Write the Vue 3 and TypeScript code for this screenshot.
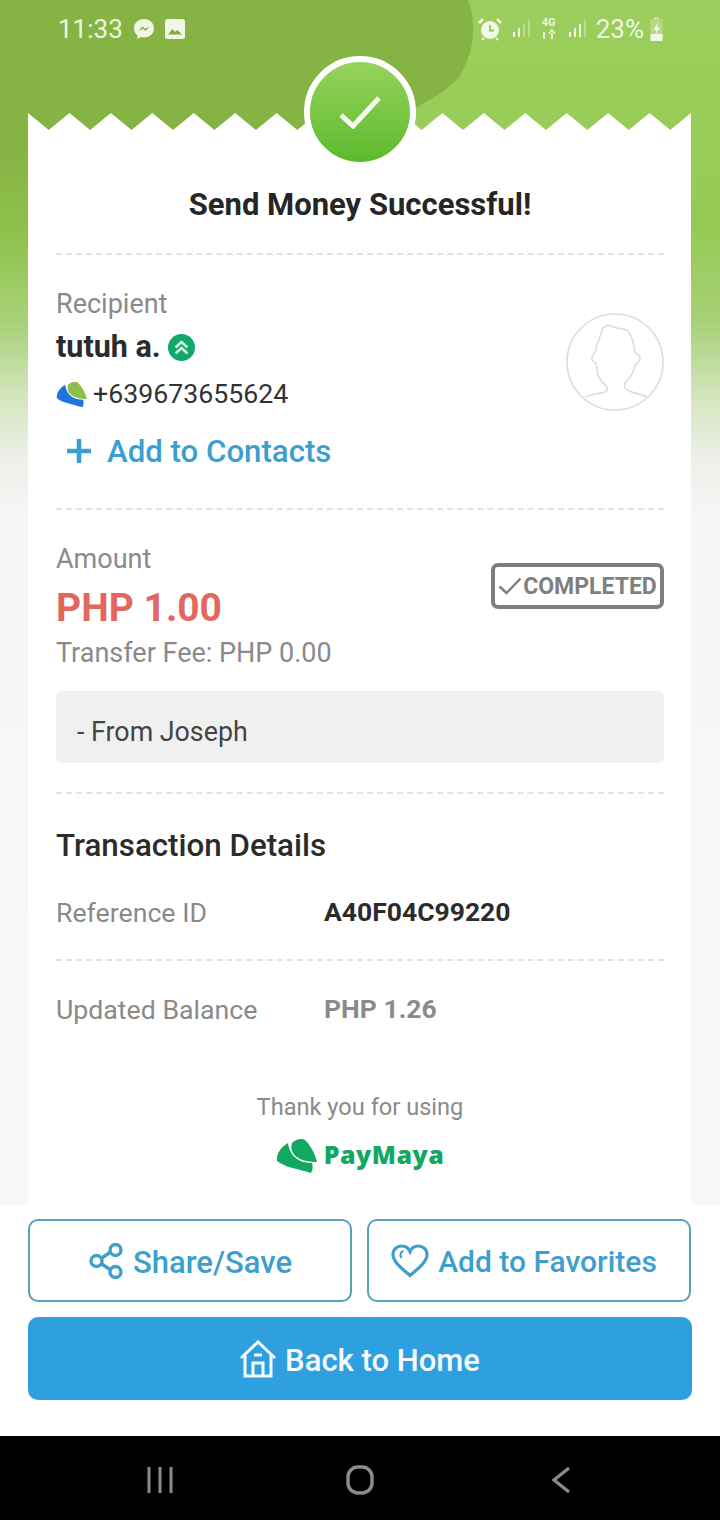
<script setup lang="ts">
const teeth = 16
const toothW = 663 / teeth
const points: string[] = ['0,18', '0,0']
for (let i = 0; i < teeth; i++) {
  points.push(`${(i + 0.5) * toothW},17`, `${(i + 1) * toothW},0`)
}
points.push('663,18')
const sawtooth = points.join(' ')

const signalBars = [
  { x: 1, y: 12, h: 5 },
  { x: 6, y: 8, h: 9 },
  { x: 11, y: 4, h: 13 },
  { x: 16, y: 0, h: 17 },
]
</script>

<template>
  <div class="page">
    <svg class="backdrop" width="720" height="480" viewBox="0 0 720 480" aria-hidden="true">
      <defs>
        <linearGradient id="blobFade" x1="0" y1="0" x2="0" y2="1">
          <stop offset="0" stop-color="#86b444" />
          <stop offset="0.5" stop-color="#86b444" />
          <stop offset="1" stop-color="#86b444" stop-opacity="0" />
        </linearGradient>
      </defs>
      <path
        d="M0 0H468C476 20 476 50 459 77C448 90 430 100 415 108V220H28V300H0Z"
        fill="url(#blobFade)"
      />
    </svg>

    <header class="status-bar">
      <div class="status-left">
        <span class="status-text">11:33</span>
        <svg width="22" height="22" viewBox="0 0 22 22">
          <path d="M11 1C5.4 1 1 5 1 10.300c0 2.900 1.300 5.300 3.300 7V21l3.300-1.900c1.100.3 2.200.5 3.400.5 5.600 0 10-4 10-9.300S16.600 1 11 1Z" fill="#f1f7e4" />
          <path d="M5.500 13 9.500 8.500l2.500 2.300 4.500-2.300-4 4.500-2.500-2.300Z" fill="#7fae3e" />
        </svg>
        <svg width="20" height="20" viewBox="0 0 20 20">
          <rect width="20" height="20" rx="2.500" fill="#f1f7e4" />
          <path d="M3 15.500 7.500 10l2.500 3 2.500-2 4.500 4.500Z" fill="#7fae3e" />
        </svg>
      </div>
      <div class="status-right">
        <svg width="24" height="24" viewBox="0 0 24 24">
          <circle cx="12" cy="13" r="9" fill="#f4f8e8" />
          <path d="M12 8v5.500h4" fill="none" stroke="#93c455" stroke-width="1.800" />
          <path d="M1 6 5 2M23 6l-4-4" stroke="#f4f8e8" stroke-width="2.500" />
          <path d="M6 21l-2 2M18 21l2 2" stroke="#f4f8e8" stroke-width="2" />
        </svg>
        <svg class="signal" width="20" height="18" viewBox="0 0 20 18">
          <rect v-for="(b, i) in signalBars" :key="i" :x="b.x" :y="b.y" width="2" :height="b.h" :fill="i < 2 ? '#f4f8e8' : '#bcdc8f'" />
        </svg>
        <div class="net">
          <span class="net-label">4G</span>
          <svg width="16" height="11" viewBox="0 0 16 11">
            <path d="M3 10V3M11 10V4M8 4.500 11 1l3 3.500" fill="none" stroke="#eef6dd" stroke-width="1.800" />
          </svg>
        </div>
        <svg class="signal" width="20" height="18" viewBox="0 0 20 18">
          <rect v-for="(b, i) in signalBars" :key="i" :x="b.x" :y="b.y" width="2" :height="b.h" :fill="i < 3 ? '#f4f8e8' : '#bcdc8f'" />
        </svg>
        <span class="status-text">23%</span>
        <svg class="battery" width="15" height="24" viewBox="0 0 14 24">
          <rect x="4.500" y="0" width="5" height="2" fill="#cfe3ad" />
          <rect x="1" y="2" width="12" height="22" fill="#b7d887" />
          <rect x="1" y="17" width="12" height="7" fill="#f4f8e8" />
          <path d="M8.500 5 4 13h3l-1.500 6 5-8.500H7.500Z" fill="#f4f8e8" />
        </svg>
      </div>
    </header>

    <div class="check-badge">
      <svg width="44" height="34" viewBox="0 0 44 34">
        <path d="M3 20 15 31 41 3" fill="none" stroke="#f6fbee" stroke-width="5" />
      </svg>
    </div>

    <main class="receipt">
      <svg class="teeth" width="663" height="18" viewBox="0 0 663 18" aria-hidden="true">
        <polygon :points="sawtooth" fill="#fff" />
      </svg>
      <div class="receipt-body">
        <h1 class="title">Send Money Successful!</h1>
        <div class="divider"></div>

        <section class="recipient">
          <div class="recipient-info">
            <div class="label">Recipient</div>
            <div class="name-row">
              <span class="name">tutuh a.</span>
              <svg width="27" height="27" viewBox="0 0 27 27">
                <circle cx="13.500" cy="13.500" r="13.500" fill="#12a86b" />
                <path d="M7.500 13.500 13.500 8l6 5.500M7.500 19.500l6-5.500 6 5.500" fill="none" stroke="#d8f5e6" stroke-width="2.400" />
              </svg>
            </div>
            <div class="phone-row">
              <svg width="31" height="27" viewBox="0 0 41 36">
                <path d="M16 5C20 1 26 0 29 2C35 8 39 16 41 24C32 24 21 22 17 15C15 11 15 8 16 5Z" fill="#8dbf4a" />
                <path d="M12 5C5 9 0 16 1 23C8 29 22 31 35 35C37 32 37 28 36 25C25 25 14 20 12 5Z" fill="#1f74dd" />
              </svg>
              <span>+639673655624</span>
            </div>
            <div class="add-contact">
              <svg width="26" height="26" viewBox="0 0 26 26">
                <path d="M13 1V25M1 13H25" stroke="#3a9fd0" stroke-width="4.500" />
              </svg>
              <span>Add to Contacts</span>
            </div>
          </div>
          <svg class="avatar" width="98" height="98" viewBox="0 0 98 98" aria-hidden="true">
            <circle cx="49" cy="49" r="48" fill="#fff" stroke="#dcdcdc" stroke-width="1.600" />
            <path
              d="M19 84C28 80 34 81 39 79C41 78 42 76 41 74C37 70 33 66 32 62L30 50C27 49 25 46 26 44C27 41 29 39 30 37C30 33 31 31 32 29L37 15L42 12L51 15L61 17C64 20 66 25 67 29C68 33 69 36 69 40C72 41 74 43 74 45C74 48 71 51 69 52L67 59C65 64 62 67 59 70C58 73 59 76 61 77C66 80 75 81 81 84"
              fill="none"
              stroke="#dcdcdc"
              stroke-width="1.600"
            />
          </svg>
        </section>
        <div class="divider"></div>

        <section class="amount">
          <div class="amount-row">
            <div>
              <div class="label">Amount</div>
              <div class="price">PHP 1.00</div>
              <div class="label fee">Transfer Fee: PHP 0.00</div>
            </div>
            <div class="status-chip">
              <svg width="24" height="18" viewBox="0 0 24 18">
                <path d="M1.500 9.500 8.500 16 22.500 1.500" fill="none" stroke="#7f7f7f" stroke-width="2.400" />
              </svg>
              <span>COMPLETED</span>
            </div>
          </div>
          <div class="note">- From Joseph</div>
        </section>
        <div class="divider"></div>

        <section class="details">
          <h2 class="details-title">Transaction Details</h2>
          <div class="detail-row">
            <span class="label">Reference ID</span>
            <span class="detail-value">A40F04C99220</span>
          </div>
          <div class="divider row-divider"></div>
          <div class="detail-row">
            <span class="label">Updated Balance</span>
            <span class="detail-value muted">PHP 1.26</span>
          </div>
        </section>

        <div class="thanks">
          <div class="thanks-text">Thank you for using</div>
          <div class="brand">
            <svg width="41" height="36" viewBox="0 0 41 36">
              <path d="M16 5C20 1 26 0 29 2C35 8 39 16 41 24C32 24 21 22 17 15C15 11 15 8 16 5Z" fill="#12a860" />
              <path d="M12 5C5 9 0 16 1 23C8 29 22 31 35 35C37 32 37 28 36 25C25 25 14 20 12 5Z" fill="#12a860" />
            </svg>
            <span class="brand-name">PayMaya</span>
          </div>
        </div>
      </div>
    </main>

    <footer class="actions">
      <div class="action-row">
        <button class="btn btn-outline">
          <svg width="36" height="36" viewBox="0 0 36 36">
            <g fill="none" stroke="#3f9fcc" stroke-width="3.400">
              <path d="M13 15.500 23.500 8.500M13 20.500 23.500 27.500" />
              <circle cx="8.500" cy="18" r="5.500" />
              <circle cx="27.500" cy="7" r="5.500" />
              <circle cx="27.500" cy="29" r="5.500" />
            </g>
          </svg>
          <span class="btn-label">Share/Save</span>
        </button>
        <button class="btn btn-outline favorites">
          <svg width="38" height="34" viewBox="0 0 38 34">
            <path d="M19 31.500C10 24 2 17.500 2 10.500C2 5.500 6 2 10.500 2C14 2 17.500 4 19 7.500C20.500 4 24 2 27.500 2C32 2 36 5.500 36 10.500C36 17.500 28 24 19 31.500Z" fill="none" stroke="#3f9fcc" stroke-width="3.200" />
            <path d="M10.500 14C8.500 11 9.500 8 12.500 7" fill="none" stroke="#3f9fcc" stroke-width="2.200" />
          </svg>
          <span class="btn-label">Add to Favorites</span>
        </button>
      </div>
      <button class="btn btn-primary">
        <svg width="36" height="38" viewBox="0 0 36 38">
          <g fill="none" stroke="#f6fbff" stroke-width="3">
            <path d="M1 18 18 2l17 16" />
            <path d="M5 15V36H31V15" />
            <path d="M13 36V23H23V36" />
            <path d="M14 15H22" />
          </g>
        </svg>
        <span class="btn-label">Back to Home</span>
      </button>
    </footer>

    <nav class="nav-bar">
      <svg width="26" height="28" viewBox="0 0 26 28">
        <path d="M2 1V27M13 1V27M24 1V27" stroke="#8c8c8c" stroke-width="3" />
      </svg>
      <svg class="nav-home" width="30" height="30" viewBox="0 0 30 30">
        <rect x="3" y="2" width="24" height="26" rx="10" fill="none" stroke="#8c8c8c" stroke-width="3.400" />
      </svg>
      <svg width="18" height="28" viewBox="0 0 18 28">
        <path d="M17 2 2 14l15 12" fill="none" stroke="#8c8c8c" stroke-width="3.200" />
      </svg>
    </nav>
  </div>
</template>

<style>
html,
body {
  margin: 0;
  background: #fff;
}
</style>

<style scoped>
.page {
  position: relative;
  width: 720px;
  height: 1520px;
  overflow: hidden;
  display: flex;
  flex-direction: column;
  font-family: Roboto, "Liberation Sans", sans-serif;
  color: #2b2b2b;
  background: linear-gradient(
    to bottom,
    #9bce5c 0,
    #96ca55 230px,
    #a7d077 320px,
    #d5e6c0 400px,
    #eef0ea 460px,
    #f6f6f6 520px,
    #f8f8f8 1200px
  );
}
.backdrop {
  position: absolute;
  top: 0;
  left: 0;
}
.status-bar {
  position: relative;
  height: 57px;
  margin-bottom: 56px;
  flex-shrink: 0;
  box-sizing: border-box;
  padding: 0 56px 0 58px;
  display: flex;
  align-items: center;
  justify-content: space-between;
}
.status-left,
.status-right {
  display: flex;
  align-items: center;
}
.status-left {
  gap: 10px;
}
.status-right {
  gap: 8px;
}
.status-text {
  font-size: 26px;
  line-height: 32px;
  color: #eff7e0;
}
.signal {
  margin-left: 2px;
}
.battery {
  margin-left: -3px;
}
.net {
  display: flex;
  flex-direction: column;
  align-items: center;
  width: 18px;
  color: #eef6dd;
}
.net-label {
  font-size: 11px;
  line-height: 12px;
  font-weight: 700;
}
.check-badge {
  position: absolute;
  top: 56px;
  left: 304px;
  width: 112px;
  height: 112px;
  box-sizing: border-box;
  border: 6px solid #fff;
  border-radius: 50%;
  background: linear-gradient(to bottom, #98d35c, #5cba2c);
  display: flex;
  align-items: center;
  justify-content: center;
  z-index: 2;
}
.receipt {
  width: 663px;
  margin-left: 28px;
  flex-shrink: 0;
  position: relative;
}
.teeth {
  display: block;
  margin-bottom: -1px;
}
.receipt-body {
  background: #fff;
  height: 1075px;
  box-sizing: border-box;
  padding: 55px 27px 0 28px;
}
.title {
  margin: 0 0 28px;
  text-align: center;
  font-size: 31px;
  line-height: 40px;
  font-weight: 700;
  color: #262626;
}
.divider {
  height: 0;
  border-top: 2px dashed #e2e2e2;
}
.recipient {
  display: flex;
  justify-content: space-between;
  align-items: flex-start;
  padding: 33px 0 37px;
}
.label {
  font-size: 27px;
  line-height: 32px;
  color: #8a8a8a;
}
.name-row {
  margin-top: 7px;
  height: 40px;
  display: flex;
  align-items: center;
  gap: 7px;
}
.name {
  font-size: 30.500px;
  line-height: 40px;
  font-weight: 700;
}
.phone-row {
  margin-top: 11px;
  height: 32px;
  display: flex;
  align-items: center;
  gap: 6px;
  font-size: 26.700px;
  color: #333;
}
.add-contact {
  margin-top: 21px;
  margin-left: 10px;
  height: 40px;
  display: flex;
  align-items: center;
  gap: 15px;
  font-size: 31.200px;
  font-weight: 500;
  color: #3a9fd0;
}
.avatar {
  margin-top: 25px;
}
.amount {
  padding: 33px 0 29px;
}
.amount-row {
  display: flex;
  justify-content: space-between;
  align-items: flex-start;
}
.price {
  margin-top: 9px;
  font-size: 39px;
  line-height: 48px;
  font-weight: 700;
  color: #e0685f;
}
.fee {
  margin-top: 5px;
}
.status-chip {
  margin-top: 20px;
  width: 173px;
  height: 46px;
  box-sizing: border-box;
  border: 4px solid #7f7f7f;
  border-radius: 7px;
  display: flex;
  align-items: center;
  justify-content: center;
  gap: 1px;
  font-size: 23px;
  font-weight: 700;
  color: #7f7f7f;
}
.note {
  margin-top: 22px;
  height: 72px;
  box-sizing: border-box;
  padding: 9px 21px 0;
  display: flex;
  align-items: center;
  border-radius: 6px;
  background: #f0f0f0;
  font-size: 26.800px;
  color: #444;
}
.details {
  padding-top: 32px;
}
.details-title {
  margin: 0 0 31px;
  font-size: 31.300px;
  line-height: 40px;
  font-weight: 500;
}
.detail-row {
  display: flex;
  align-items: center;
  height: 32px;
}
.detail-row .label {
  width: 268px;
  font-size: 26.700px;
}
.detail-value {
  padding-bottom: 3px;
  font-size: 26.500px;
  font-weight: 700;
  color: #2b2b2b;
}
.detail-value.muted {
  color: #8a8a8a;
}
.row-divider {
  margin: 30px 0 33px;
}
.thanks {
  margin-top: 66px;
  display: flex;
  flex-direction: column;
  align-items: center;
}
.thanks-text {
  font-size: 23.600px;
  line-height: 30px;
  color: #8a8a8a;
}
.brand {
  margin-top: 15px;
  height: 37px;
  display: flex;
  align-items: center;
  gap: 7px;
  font-family: "Open Sans", Roboto, sans-serif;
  font-size: 25px;
  font-weight: 800;
  letter-spacing: 0.5px;
  color: #12a860;
}
.brand-name {
  padding-bottom: 4px;
}
.actions {
  flex-shrink: 0;
  background: #fff;
  padding: 14px 28px 36px;
  display: flex;
  flex-direction: column;
  gap: 15px;
}
.action-row {
  display: flex;
  gap: 15px;
}
.btn {
  height: 83px;
  box-sizing: border-box;
  border-radius: 10px;
  display: flex;
  align-items: center;
  justify-content: center;
  gap: 9px;
  font-family: inherit;
  font-size: 31px;
  font-weight: 500;
  padding: 0;
}
.btn-label {
  padding-top: 3px;
}
.btn-outline {
  width: 324px;
  background: #fff;
  border: 2px solid #5b9fb8;
  color: #3f9fcc;
}
.favorites {
  font-size: 30px;
  padding-right: 10px;
}
.favorites .btn-label {
  padding-top: 1px;
}
.btn-primary {
  width: 100%;
  background: #2fa0df;
  border: none;
  color: #f6fbff;
}
.nav-bar {
  flex: 1;
  background: #000;
  display: flex;
  align-items: center;
  padding: 4px 150px 0 147px;
  justify-content: space-between;
}
.nav-home {
  margin: 0 3px 0 -3px;
}
</style>
